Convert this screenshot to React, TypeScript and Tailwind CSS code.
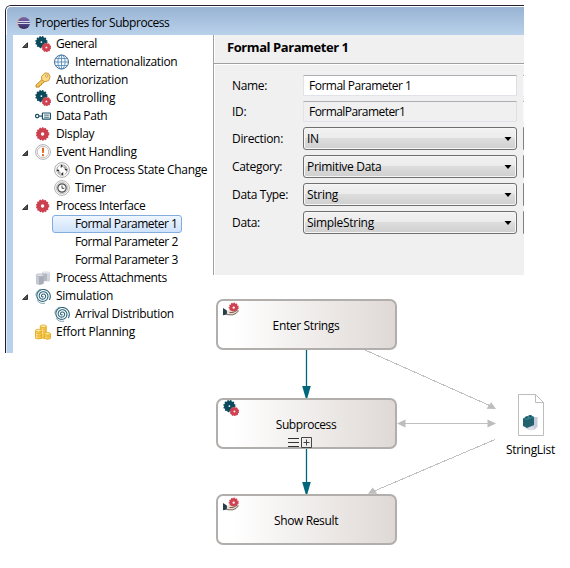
import type { ReactNode } from 'react';

/* Sixteen pixel drawings used by the tree and the diagram */

function Gear({ cx, cy, r, fill, hole, teeth }: { cx: number; cy: number; r: number; fill: string; hole: number; teeth: number }) {
  const dash = (Math.PI * 2 * r) / (teeth * 2);
  return (
    <g>
      <circle cx={cx} cy={cy} r={r} fill="none" stroke={fill} strokeWidth="2" strokeDasharray={`${dash * 1.1} ${dash * 0.9}`} />
      <circle cx={cx} cy={cy} r={(r + 0.3 + hole) / 2} fill="none" stroke={fill} strokeWidth={r + 0.3 - hole} />
    </g>
  );
}

function Icon({ children }: { children: ReactNode }) {
  return (
    <svg width="16" height="16" viewBox="0 0 16 16" className="block shrink-0">
      {children}
    </svg>
  );
}

const GearsIcon = () => (
  <Icon>
    <Gear cx={6.4} cy={6.1} r={5.1} hole={0.9} teeth={12} fill="#0b4a5c" />
    <circle cx="11.4" cy="11.5" r="4.4" fill="#f3dfe2" opacity=".55" />
    <Gear cx={11.4} cy={11.5} r={3.7} hole={1} teeth={10} fill="#cf4050" />
  </Icon>
);

const RedGearIcon = () => (
  <Icon>
    <Gear cx={7.6} cy={8} r={5.7} hole={1.7} teeth={14} fill="#cc3f4f" />
  </Icon>
);

const GlobeIcon = () => (
  <Icon>
    <circle cx="7.5" cy="8" r="7" fill="#f4f9fd" stroke="#39679a" />
    <g fill="none" stroke="#5d8db9" strokeWidth="0.9">
      <ellipse cx="7.5" cy="8" rx="3.6" ry="7" />
      <path d="M7.5 1v14M.5 8h14M1.6 4.5h11.8M1.6 11.5h11.8" />
    </g>
  </Icon>
);

const KeyIcon = () => (
  <Icon>
    <path d="M7.3 7.2 1 13.1v2h3.2l.4-1.7 1.8-.3.3-1.6 1.7-.5 1.1-1.5Z" fill="#f6c956" stroke="#b98222" strokeWidth=".9" strokeLinejoin="round" />
    <path d="M6.5 4.6 9.8.9l3.6.4 1.7 3.3-1.4 4-3.9 1.1-3-1.6Z" fill="#fbdc83" stroke="#c6902e" strokeWidth=".9" strokeLinejoin="round" />
    <circle cx="11.7" cy="4" r="1.2" fill="#fff" stroke="#b98222" strokeWidth=".7" />
  </Icon>
);

const DataPathIcon = () => (
  <Icon>
    <g fill="none" stroke="#1d5266" strokeWidth="1.2">
      <circle cx="2.2" cy="8.1" r="1.7" />
      <path d="M4 8.1h3.3" />
      <rect x="7.4" y="5" width="8" height="6.2" rx=".5" />
      <path d="M9.1 7.1h4.8M9.1 9.2h4.8" strokeWidth=".9" />
    </g>
  </Icon>
);

const Ring = () => (
  <>
    <circle cx="8" cy="8" r="7.4" fill="#fdfdfd" stroke="#a8a8a8" strokeWidth=".9" />
    <circle cx="8" cy="8" r="5.7" fill="#fff" stroke="#b3b3b3" strokeWidth=".8" />
  </>
);

const EventIcon = () => (
  <Icon>
    <Ring />
    <path d="M6.9 3.8h2.2l-.3 5.1H7.2Z" fill="#e8601c" />
    <rect x="7" y="10.2" width="2" height="2" fill="#e8601c" />
  </Icon>
);

const StateChangeIcon = () => (
  <Icon>
    <circle cx="8" cy="8" r="7.4" fill="#fdfdfd" stroke="#a0a0a0" strokeWidth=".9" />
    <circle cx="8" cy="8" r="5.3" fill="#fff" stroke="#9a9a9a" strokeWidth=".9" strokeDasharray="5.3 3" />
    <path d="m6.800 2 2.300 2-2.300 1.900ZM14 6.800l-1.800 2.300-1.900-2.300ZM9.200 10v4l-2.300-2ZM2 9.200l1.800-2.300 1.900 2.300Z" fill="#2b2b2b" />
    <path d="M4.800 9v2h2M11.200 7V5h-2" fill="none" stroke="#666" strokeWidth=".8" />
  </Icon>
);

const TimerIcon = () => (
  <Icon>
    <Ring />
    <circle cx="8" cy="8" r="4.2" fill="#fff" stroke="#4f4f4f" strokeWidth="1.2" />
    <path d="M8 5.5v2.8h2.4" fill="none" stroke="#444" />
  </Icon>
);

const AttachmentsIcon = () => (
  <Icon>
    <path d="M7 2.2h7.800v9H7Z" fill="#b4b8c3" />
    <path d="M12 2.2h2.800v9H12Z" fill="#d2d5dc" />
    <ellipse cx="10.9" cy="2.4" rx="3.9" ry="1.2" fill="#e3e5ea" />
    <path d="M1 5.2v8.400q3.800 2.400 7.800 0V5.200Z" fill="#a7acb8" />
    <path d="M1 5.2v8.400q1.200.900 3 .900V5.200Z" fill="#c5c9d2" />
    <ellipse cx="4.9" cy="5.2" rx="3.9" ry="1.4" fill="#dddfe5" stroke="#a0a5b1" strokeWidth=".5" />
  </Icon>
);

/* Three widening turns around the centre of the icon */
const spiralPoints = Array.from({ length: 109 }, (_, i) => {
  const angle = (i * Math.PI) / 18 + 0.6;
  const radius = 0.5 + (i / 108) * 6.8;
  return `${(8 + radius * 1.03 * Math.cos(angle)).toFixed(2)},${(8 + radius * Math.sin(angle)).toFixed(2)}`;
}).join(' ');

const SpiralIcon = () => (
  <Icon>
    <polyline points={spiralPoints} fill="none" stroke="#2f667a" strokeWidth="1.1" />
    <path d="M.8 7.500A7.200 7.200 0 0 1 6 1.100M10 15.100a7.400 7.400 0 0 1-8-3" fill="none" stroke="#5f8c9b" strokeWidth=".8" />
  </Icon>
);

const CoinsIcon = () => (
  <Icon>
    <g fill="#f6cb4f" stroke="#e0a41f" strokeWidth=".8">
      <path d="M5.300 2.200v12h6v-12Z" />
      <path d="M9.300 9.800v4.600q3 1.700 6.200 0V9.800Z" />
      <path d="M.5 6.600v7.600q2.800 1.600 5.800 0V6.600Z" />
      <ellipse cx="8.300" cy="2.200" rx="3" ry="1.300" fill="#fff0a8" />
      <ellipse cx="12.400" cy="9.800" rx="3.100" ry="1.300" fill="#ffe88c" />
      <ellipse cx="3.400" cy="6.600" rx="2.900" ry="1.300" fill="#fff0a8" />
    </g>
    <path d="M1.800 8.500v5.500M7.300 4.500v5M11 11.800v2.500" stroke="#fff1b3" />
    <path d="M.5 9q2.900 1.500 5.800 0M.5 11.500q2.900 1.500 5.800 0M5.300 4.700q3 1.500 6 0M5.500 7.200q3 1.500 5.800 0M9.300 12.300q3 1.500 6.200 0" fill="none" stroke="#dfa526" strokeWidth=".6" />
  </Icon>
);

const HandGearIcon = () => (
  <Icon>
    <g transform="translate(0 1)">
      <Gear cx={10.7} cy={5.6} r={4} hole={1.2} teeth={11} fill="#cf4050" />
      <path d="M3.800 8.900 6.500 8l3.200 1.500 4.800-1.500 1.300.5-2.700 2.900-3.600 1.500-5.700-.3Z" fill="#f1dccb" />
      <path d="M3.800 12.600l5.700.3 3.600-1.500 2.700-2.900M6.500 10.500h3.400l4.600-2.300" fill="none" stroke="#3a2d29" strokeWidth=".7" />
      <path d="M0 6 3.900 8.600v3.900L0 13.300Z" fill="#233f4c" />
    </g>
  </Icon>
);

const EclipseIcon = () => (
  <Icon>
    <defs>
      <linearGradient id="orb" x1="0" y1="0" x2="0" y2="1">
        <stop offset="0" stopColor="#7b6aab" />
        <stop offset="1" stopColor="#302864" />
      </linearGradient>
    </defs>
    <circle cx="6.900" cy="8" r="5.900" fill="#d9a684" />
    <circle cx="7.900" cy="8" r="6.100" fill="url(#orb)" />
    <path d="M1.800 6.500h12.200M1.500 8.500h12.800" stroke="#d5d5ec" strokeWidth="1" />
  </Icon>
);

/* Tree */

type Item = { label: string; icon?: ReactNode; child?: boolean; open?: boolean; selected?: boolean; track: string };

const items: Item[] = [
  { label: 'General', icon: <GearsIcon />, open: true, track: 'tracking-[-0.5px]' },
  { label: 'Internationalization', icon: <GlobeIcon />, child: true, track: 'tracking-[-0.36px]' },
  { label: 'Authorization', icon: <KeyIcon />, track: 'tracking-[-0.3px]' },
  { label: 'Controlling', icon: <GearsIcon />, track: 'tracking-[-0.2px]' },
  { label: 'Data Path', icon: <DataPathIcon />, track: 'tracking-[-0.42px]' },
  { label: 'Display', icon: <RedGearIcon />, track: 'tracking-[-0.34px]' },
  { label: 'Event Handling', icon: <EventIcon />, open: true, track: 'tracking-[-0.26px]' },
  { label: 'On Process State Change', icon: <StateChangeIcon />, child: true, track: 'tracking-[-0.34px]' },
  { label: 'Timer', icon: <TimerIcon />, child: true, track: 'tracking-[-0.3px]' },
  { label: 'Process Interface', icon: <RedGearIcon />, open: true, track: 'tracking-[-0.41px]' },
  { label: 'Formal Parameter 1', child: true, selected: true, track: 'tracking-[-0.5px]' },
  { label: 'Formal Parameter 2', child: true, track: 'tracking-[-0.48px]' },
  { label: 'Formal Parameter 3', child: true, track: 'tracking-[-0.48px]' },
  { label: 'Process Attachments', icon: <AttachmentsIcon />, track: 'tracking-[-0.35px]' },
  { label: 'Simulation', icon: <SpiralIcon />, open: true, track: 'tracking-[-0.26px]' },
  { label: 'Arrival Distribution', icon: <SpiralIcon />, child: true, track: 'tracking-[-0.33px]' },
  { label: 'Effort Planning', icon: <CoinsIcon />, track: 'tracking-[-0.26px]' },
];

function TreeRow({ label, icon, child, open, selected, track }: Item) {
  if (!icon) {
    return (
      <div
        className={`ml-[39px] flex h-[18px] w-[130px] items-center rounded-[3px] border pl-[22px] ${
          selected ? 'border-[#84acdd] bg-linear-to-b from-[#eff6fe] to-[#cfe3fb]' : 'border-transparent'
        }`}
      >
        <span className={`whitespace-nowrap ${track}`}>{label}</span>
      </div>
    );
  }
  return (
    <div className={`flex h-[18px] items-center ${child ? 'pl-[41px]' : 'pl-[9px]'}`}>
      {!child && (
        <svg width="6" height="6" viewBox="0 0 6 6" className="mt-px mr-[7px] block shrink-0">
          {open && <path d="M5.500.700v4.800H.7Z" fill="#555" stroke="#222" strokeWidth=".9" />}
        </svg>
      )}
      {icon}
      <span className={`ml-[5px] whitespace-nowrap ${track}`}>{label}</span>
    </div>
  );
}

/* Form */

function Row({ label, children, tall }: { label: string; children: ReactNode; tall?: boolean }) {
  return (
    <div className={`flex items-center ${tall ? 'h-[23px]' : 'h-[21px]'}`}>
      <span className="w-[71px] shrink-0 tracking-[-0.32px]">{label}</span>
      {children}
      <div
        className={`ml-[6px] h-full w-px shrink-0 ${tall ? 'rounded-l-[1px] bg-[#808080]' : 'border-t border-[#abadb3] bg-[#fafafa]'}`}
      />
    </div>
  );
}

function TextField({ value, readOnly, track }: { value: string; readOnly?: boolean; track: string }) {
  return (
    <div
      className={`flex h-full w-[214px] shrink-0 items-center rounded-[1px] border border-[#e2e3ea] border-t-[#abadb3] border-r-[#dbdfe6] pl-[5px] ${
        readOnly ? 'bg-[#f0f0f0]' : 'bg-white'
      }`}
    >
      <span className={track}>{value}</span>
    </div>
  );
}

function Select({ value, track }: { value: string; track: string }) {
  return (
    <div className="flex h-full w-[214px] shrink-0 items-center justify-between rounded-[3px] border border-[#707070] bg-[linear-gradient(to_bottom,#f2f2f2_0%,#ebebeb_48%,#dddddd_50%,#cfcfcf_100%)] pr-[4px] pl-[3px] shadow-[inset_0_0_0_1px_#f6f6f6]">
      <span className={track}>{value}</span>
      <svg width="8" height="4" viewBox="0 0 8 4" className="block">
        <path d="M.5 0h7L4 4Z" fill="#000" />
      </svg>
    </div>
  );
}

/* Diagram */

function Activity({ label, icon, place, track, children }: { label: string; icon: ReactNode; place: string; track: string; children?: ReactNode }) {
  return (
    <div
      className={`absolute left-[216px] h-[51px] w-[181px] rounded-[7px] border-2 border-[#b1aeac] bg-[linear-gradient(to_right,#ffffff_8%,#dfd9d6_100%)] ${place}`}
    >
      <div className="absolute top-0 left-[5px]">{icon}</div>
      <div className="flex h-full items-center justify-center pt-[3px] pr-px">
        <span className={`whitespace-nowrap ${track}`}>{label}</span>
      </div>
      {children}
    </div>
  );
}

function Diagram() {
  return (
    <>
      <svg width="570" height="568" viewBox="0 0 570 568" className="pointer-events-none absolute top-0 left-0">
        <g fill="none" stroke="#c0c0c0" shapeRendering="crispEdges">
          <path d="m365 350 128 57M400 423.500h92M495 439.500 372 492" />
        </g>
        <g fill="#bdbdbd">
          <path d="m496 409-9.500-.300 4.700-6.500ZM397 423.500l8.500-4v8ZM496 423.500l-8.500-4v8ZM368 493.800l4.700-6.300 4.600 6.300Z" />
        </g>
        <path d="M306.500 350v38M306.500 449v36" stroke="#00687a" strokeWidth="1.300" />
        <path d="M302.200 386h8.600l-3.600 12.500h-1.400ZM302.200 482h8.600l-3.600 12.500h-1.400Z" fill="#00687a" />
        <g stroke="#bdbdbd" fill="#fff">
          <path d="M518.500 394.500h17l8 8v33h-25Z" />
          <path d="M535.500 394.500v8h8" fill="none" />
        </g>
        <path d="M529 417h8.500v10l-4 3.300-5.500-1Z" fill="#c5cbd8" />
        <path d="M525 427h9v2.500q-4 1.500-8-.5Z" fill="#d9deea" />
        <path d="m523 418.500 7-3.500 4 2v8l-7 3-4-2Z" fill="#23616f" />
        <path d="m523 418.500 7-3.500 4 2-7 3Z" fill="#3a8390" />
        <path d="M525.500 416.500h2v2h-2ZM529.500 415.200h2v2h-2Z" fill="#17505d" />
      </svg>

      <Activity label="Enter Strings" icon={<HandGearIcon />} place="top-[299px]" track="tracking-[-0.36px]" />
      <Activity label="Subprocess" icon={<GearsIcon />} place="top-[398px]" track="tracking-[-0.42px]">
        <svg width="25" height="12" viewBox="0 0 25 12" className="absolute top-[37px] left-[70px]">
          <path d="M0 1.500h11M0 5.500h11M0 9.500h11" stroke="#333" strokeWidth="1.200" />
          <path d="M13.500.500h10v10h-10ZM18.500 2.500v6M15.500 5.500h6" fill="none" stroke="#444" />
        </svg>
      </Activity>
      <Activity label="Show Result" icon={<HandGearIcon />} place="top-[494px]" track="tracking-[-0.36px]" />
      <span className="absolute top-[442px] left-[506px] leading-4 tracking-[-0.3px]">StringList</span>
    </>
  );
}

export default function App() {
  return (
    <div className="relative h-[568px] w-[570px] overflow-hidden bg-white pt-[5px] pl-[5px] font-['Open_Sans','Noto_Sans',sans-serif] text-[12px] leading-4 text-black">
      <section className="h-[348px] w-[519px] rounded-tl-[6px] border-t border-l border-[#241f2c] bg-white">
        <header className="flex h-[29px] items-center gap-[3px] rounded-tl-[5px] border-t border-l border-white bg-linear-to-b from-[#98b3d3] to-[#b9d1ea] pt-[4px] pl-[9px]">
          <EclipseIcon />
          <h1 className="tracking-[-0.43px]">Properties for Subprocess</h1>
        </header>
        <div className="flex h-[318px]">
          <div className="w-[7px] shrink-0 border-l border-[#dce9f6] bg-[#b9d1ea]" />
          <nav className="w-[200px] shrink-0 bg-white">
            {items.map((item) => (
              <TreeRow key={item.label} {...item} />
            ))}
          </nav>
          <main className="h-[240px] w-[311px] overflow-hidden border-l border-[#a0a0a0] bg-[#f0f0f0] shadow-[inset_1px_0_0_#fff]">
            <h2 className="flex h-[29px] items-center border-b border-[#a0a0a0] pb-[4px] pl-[13px] text-[13px] font-bold tracking-[-0.43px] shadow-[0_1px_0_#fff]">
              Formal Parameter 1
            </h2>
            <div className="flex flex-col gap-[5px] pt-[11px] pl-[18px]">
              <Row label="Name:">
                <TextField value="Formal Parameter 1" track="tracking-[-0.5px]" />
              </Row>
              <Row label="ID:">
                <TextField value="FormalParameter1" readOnly track="tracking-[-0.56px]" />
              </Row>
              <Row label="Direction:" tall>
                <Select value="IN" track="tracking-[-0.26px]" />
              </Row>
              <Row label="Category:" tall>
                <Select value="Primitive Data" track="tracking-[-0.32px]" />
              </Row>
              <Row label="Data Type:" tall>
                <Select value="String" track="tracking-[-0.26px]" />
              </Row>
              <Row label="Data:" tall>
                <Select value="SimpleString" track="tracking-[-0.3px]" />
              </Row>
            </div>
          </main>
        </div>
      </section>
      <Diagram />
    </div>
  );
}
